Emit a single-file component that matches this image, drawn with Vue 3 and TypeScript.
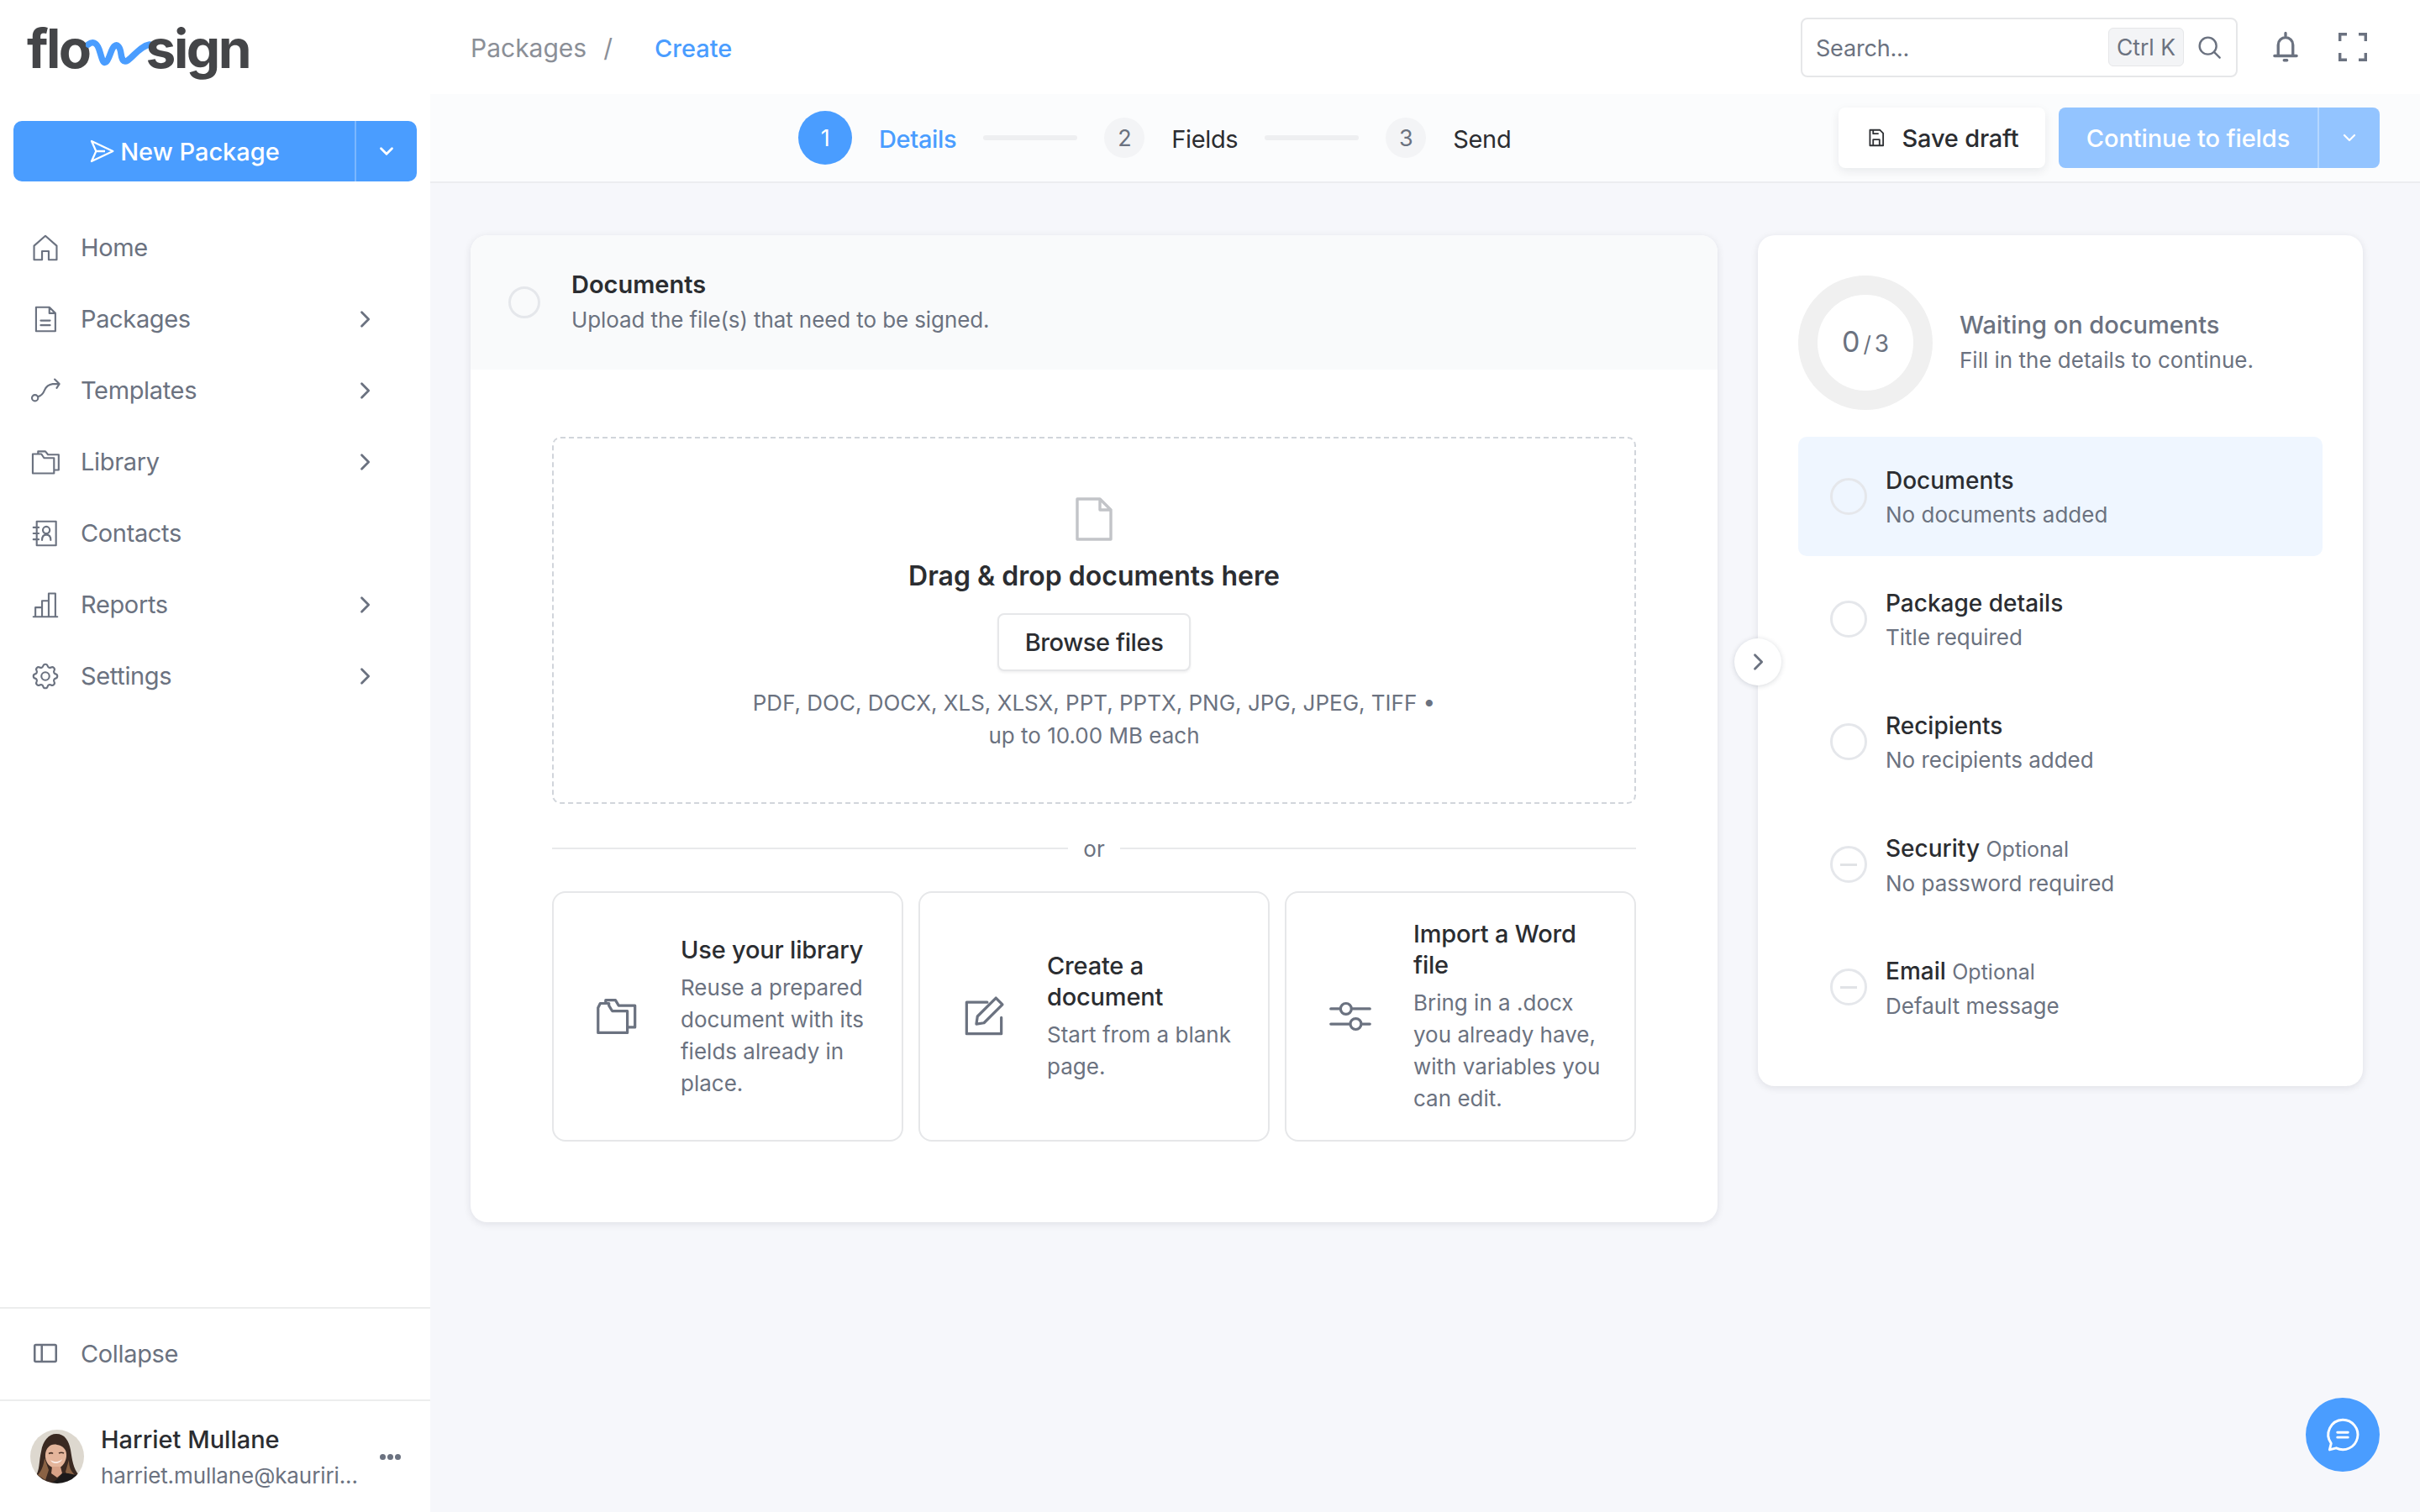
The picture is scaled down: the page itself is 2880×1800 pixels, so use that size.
<template>
  <div class="app">
    <aside class="sidebar">
      <div class="logo">
        <span>flo</span>
        <svg class="logo-wave" viewBox="0 0 78 34" width="78" height="34" fill="none">
          <path d="M3 7C8 3 13 4 16 13c3 9 4 17 8 15 4-2 6-16 10-19 4-3 7 1 8 9 1 7 3 11 8 8C58 20 65 9 76 7" stroke="#4a9dff" stroke-width="7.5" stroke-linecap="round" />
        </svg>
        <span>sign</span>
      </div>

      <div class="new-btn">
        <button type="button" class="new-main">
          <svg viewBox="0 0 24 24" width="32" height="32" fill="none" stroke="#fff" stroke-width="1.7" stroke-linejoin="round"><path d="M3 3l19 9-19 9 4-9zM7 12h8" /></svg>
          New Package
        </button>
        <button type="button" class="new-caret">
          <svg viewBox="0 0 24 24" width="26" height="26" fill="none" stroke="#fff" stroke-width="2.6" stroke-linecap="round" stroke-linejoin="round"><path d="M6 9l6 6 6-6" /></svg>
        </button>
      </div>

      <nav class="nav">
        <a v-for="item in navItems" :key="item.label" class="nav-item">
          <svg class="nav-icon" viewBox="0 0 24 24" width="38" height="38" fill="none" stroke="#6b7280" stroke-width="1.35" stroke-linecap="round" stroke-linejoin="round">
            <path v-for="d in item.paths" :key="d" :d="d" />
          </svg>
          <span>{{ item.label }}</span>
          <svg v-if="item.more" class="nav-more" viewBox="0 0 24 24" width="28" height="28" fill="none" stroke="#6b7280" stroke-width="2.4" stroke-linecap="round" stroke-linejoin="round"><path d="M9 5l7 7-7 7" /></svg>
        </a>
      </nav>

      <div class="collapse">
        <svg viewBox="0 0 24 24" width="34" height="34" fill="none" stroke="#6b7280" stroke-width="1.8" stroke-linejoin="round"><rect x="3" y="5" width="18" height="14" rx="1" /><path d="M9 5v14" /></svg>
        <span>Collapse</span>
      </div>

      <div class="user">
        <svg class="avatar" viewBox="0 0 64 64" width="64" height="64">
          <defs><clipPath id="avatar-clip"><circle cx="32" cy="32" r="32" /></clipPath></defs>
          <g clip-path="url(#avatar-clip)">
            <rect width="64" height="64" fill="#ddd8cf" />
            <g class="avatar-photo">
              <path d="M5 58c7-10 5-20 8-32C15 13 22 5 31 5c10 0 15 8 17 19 2 12 3 22 10 30l-6 10H10z" fill="#3a2921" />
              <path d="M9 54c5-6 7-12 8-20l5 14-4 12zM53 54c-5-5-7-10-7-18l-4 14 4 8z" fill="#8a6244" />
              <path d="M18 29c1-8 7-13 14-11 7 1 12 6 11 14-1 8-6 14-12 14-8 0-14-8-13-17z" fill="#e4b59b" />
              <path d="M24 36c4 3 10 3 14-1-2 6-12 7-14 1z" fill="#fbeee8" />
              <path d="M22 28.500c2-1 4-1 5 0M34 28c2-1 4-1 6 0" stroke="#4a3227" stroke-width="1.6" fill="none" />
              <path d="M26 44h10l2 8-6 5-7-5z" fill="#d8a287" />
              <path d="M24 64c6-3 10-6 14-12 6-1 12 1 20 3l2 9z" fill="#1b191a" />
            </g>
          </g>
        </svg>
        <div class="user-text">
          <strong>Harriet Mullane</strong>
          <small>harriet.mullane@kauriri...</small>
        </div>
        <span class="dots"><i /><i /><i /></span>
      </div>
    </aside>

    <div class="main">
      <header class="topbar">
        <div class="crumbs">
          <span>Packages</span>
          <span class="slash">/</span>
          <span class="current">Create</span>
        </div>
        <div class="search">
          <span class="search-text">Search...</span>
          <kbd>Ctrl K</kbd>
          <svg viewBox="0 0 24 24" width="32" height="32" fill="none" stroke="#6b7280" stroke-width="1.8" stroke-linecap="round"><circle cx="11" cy="11" r="7.5" /><path d="M17 17l4.5 4.5" /></svg>
        </div>
        <svg class="bell" viewBox="0 0 24 24" width="42" height="42" fill="none" stroke="#6b7280" stroke-width="1.9" stroke-linecap="round" stroke-linejoin="round"><path d="M12 2.5v2M7 17v-6.500a5 5 0 0 1 10 0V17M4.500 18h15M11 21h2" /></svg>
        <svg class="full" viewBox="0 0 34 34" width="34" height="34" fill="none" stroke="#6b7280" stroke-width="3.4"><path d="M1.700 10V1.700H10M24 1.700h8.300V10M1.700 24v8.300H10M32.300 24v8.300H24" /></svg>
      </header>

      <div class="stepbar">
        <ol class="steps">
          <template v-for="(step, i) in steps" :key="step">
            <li v-if="i" class="step-line" />
            <li class="step" :class="{ active: i === 0 }">
              <span class="step-num">{{ i + 1 }}</span>
              <span class="step-name">{{ step }}</span>
            </li>
          </template>
        </ol>
        <div class="step-actions">
          <button type="button" class="save">
            <svg viewBox="0 0 24 24" width="26" height="26" fill="none" stroke="#2f3135" stroke-width="1.7" stroke-linejoin="round"><path d="M5 3.500h11l3.500 3.500v13.500H5zM8.500 20.500V14h7v6.500M8.500 3.500v4h6" /></svg>
            Save draft
          </button>
          <div class="continue">
            <button type="button" class="continue-main">Continue to fields</button>
            <button type="button" class="continue-caret">
              <svg viewBox="0 0 24 24" width="24" height="24" fill="none" stroke="#fff" stroke-width="2.2" stroke-linecap="round" stroke-linejoin="round"><path d="M6 9l6 6 6-6" /></svg>
            </button>
          </div>
        </div>
      </div>

      <div class="content">
        <section class="card">
          <div class="card-head">
            <span class="radio small" />
            <div class="head-text">
              <h2>Documents</h2>
              <p>Upload the file(s) that need to be signed.</p>
            </div>
          </div>
          <div class="card-body">
            <div class="drop">
              <svg viewBox="0 0 44 52" width="44" height="52" fill="none" stroke="#c2c4c8" stroke-width="3.4" stroke-linejoin="round"><path d="M2 2h27l13 13v35H2zM29 2v13h13" /></svg>
              <h3>Drag &amp; drop documents here</h3>
              <button type="button" class="browse">Browse files</button>
              <p>PDF, DOC, DOCX, XLS, XLSX, PPT, PPTX, PNG, JPG, JPEG, TIFF •<br />up to 10.00 MB each</p>
            </div>
            <div class="or"><span>or</span></div>
            <div class="options">
              <div v-for="opt in options" :key="opt.desc[0]" class="option">
                <svg class="opt-icon" viewBox="0 0 24 24" width="62" height="62" fill="none" stroke="#6b7280" stroke-width="1.25" stroke-linecap="round" stroke-linejoin="round">
                  <path v-for="d in opt.paths" :key="d" :d="d" />
                </svg>
                <div>
                  <h4><template v-for="(line, i) in opt.title" :key="line"><br v-if="i" />{{ line }}</template></h4>
                  <p><template v-for="(line, i) in opt.desc" :key="line"><br v-if="i" />{{ line }}</template></p>
                </div>
              </div>
            </div>
          </div>
        </section>

        <aside class="panel">
          <button type="button" class="panel-toggle">
            <svg viewBox="0 0 24 24" width="28" height="28" fill="none" stroke="#6b7280" stroke-width="2.4" stroke-linecap="round" stroke-linejoin="round"><path d="M9 5l7 7-7 7" /></svg>
          </button>
          <div class="progress">
            <div class="ring"><span>0</span><small>/</small><em>3</em></div>
            <div class="progress-text">
              <h3>Waiting on documents</h3>
              <p>Fill in the details to continue.</p>
            </div>
          </div>
          <ul class="checklist">
            <li v-for="(row, i) in checklist" :key="row.title" class="check-row" :class="{ current: i === 0 }">
              <span class="radio" :class="{ optional: row.optional }" />
              <div>
                <h4>{{ row.title }} <small v-if="row.optional">Optional</small></h4>
                <p>{{ row.sub }}</p>
              </div>
            </li>
          </ul>
        </aside>
      </div>
    </div>

    <button type="button" class="chat">
      <svg viewBox="0 0 24 24" width="50" height="50" fill="none" stroke="#fff" stroke-width="1.4" stroke-linecap="round" stroke-linejoin="round"><path d="M12 3.500a8.500 8.500 0 1 1-3.700 16.100l-3.800 1 .9-3.600A8.500 8.500 0 0 1 12 3.500zM9 10.700h6M9 13.500h6" /></svg>
    </button>
  </div>
</template>

<script setup lang="ts">
interface NavItem {
  label: string;
  more: boolean;
  paths: string[];
}

interface Option {
  title: string[];
  desc: string[];
  paths: string[];
}

const navItems: NavItem[] = [
  { label: "Home", more: false, paths: ["M12 3 3.500 10.500V21h6v-6.500h5V21h6V10.500z"] },
  { label: "Packages", more: true, paths: ["M5 3h10l4.500 4.500V21H5zM15 3v4.500h4.500M8.500 13h7M8.500 16.500h7"] },
  { label: "Templates", more: true, paths: ["M6.500 17.500a2.300 2.300 0 1 1-4.600 0 2.300 2.300 0 0 1 4.600 0zM6.500 16.500c3-.5 4-2.500 5-5s2.500-4 6-4.500h5M19 3.500L22.500 7l-2 3"] },
  { label: "Library", more: true, paths: ["M2.500 9.500V20.500h16V9H11L9 6H2.500zM6.500 6V4H12l2 2.500h8V18h-3.500"] },
  { label: "Contacts", more: false, paths: ["M5.500 3H20v18H5.500zM3 7.500h4M3 12h4M3 16.500h4M9.500 17c0-3 1.500-4 3.200-4s3.300 1 3.300 4M15.300 9.500a2.600 2.600 0 1 1-5.200 0 2.600 2.600 0 0 1 5.200 0z"] },
  { label: "Reports", more: true, paths: ["M3 21h18M4.500 21v-7h5v7M9.500 21V9h5M14.500 21V3.500h5V21M14.500 9v12"] },
  { label: "Settings", more: true, paths: ["M10.325 4.317c.426-1.756 2.924-1.756 3.350 0a1.724 1.724 0 0 0 2.573 1.066c1.543-.94 3.310.826 2.370 2.370a1.724 1.724 0 0 0 1.065 2.572c1.756.426 1.756 2.924 0 3.350a1.724 1.724 0 0 0-1.066 2.573c.94 1.543-.826 3.310-2.370 2.370a1.724 1.724 0 0 0-2.572 1.065c-.426 1.756-2.924 1.756-3.350 0a1.724 1.724 0 0 0-2.573-1.066c-1.543.94-3.310-.826-2.370-2.370a1.724 1.724 0 0 0-1.065-2.572c-1.756-.426-1.756-2.924 0-3.350a1.724 1.724 0 0 0 1.066-2.573c-.94-1.543.826-3.310 2.370-2.370 1 .608 2.296.07 2.572-1.065z", "M15 12a3 3 0 1 1-6 0 3 3 0 0 1 6 0z"] },
];

const steps = ["Details", "Fields", "Send"];

const options: Option[] = [
  {
    title: ["Use your library"],
    desc: ["Reuse a prepared", "document with its", "fields already in", "place."],
    paths: ["M3 8v11.500h13.500V9.500H9.500L8 7V6H4L3 8zM6.500 6V4.500H11L12.500 7H20v10h-3.500"],
  },
  {
    title: ["Create a", "document"],
    desc: ["Start from a blank", "page."],
    paths: ["M20 12.500V20H4V5.500h9.500M8.500 15.500l.5-3.500 8.500-8.500 3 3L12 15z"],
  },
  {
    title: ["Import a Word", "file"],
    desc: ["Bring in a .docx", "you already have,", "with variables you", "can edit."],
    paths: ["M3 8.500h4.500M12.500 8.500H21M12.500 8.500a2.500 2.500 0 1 1-5 0 2.500 2.500 0 0 1 5 0zM3 15.500h9M17 15.500h4M17 15.500a2.500 2.500 0 1 1-5 0 2.500 2.500 0 0 1 5 0z"],
  },
];

const checklist = [
  { title: "Documents", sub: "No documents added", optional: false },
  { title: "Package details", sub: "Title required", optional: false },
  { title: "Recipients", sub: "No recipients added", optional: false },
  { title: "Security", sub: "No password required", optional: true },
  { title: "Email", sub: "Default message", optional: true },
];
</script>

<style>
html,
body {
  margin: 0;
  background: #f6f7fb;
}
</style>

<style scoped>
.app {
  display: grid;
  grid-template-columns: 512px 1fr;
  height: 1800px;
  font-family: Inter, "Liberation Sans", sans-serif;
  font-size: 29px;
  color: #2b2d31;
}

h2, h3, h4, p, ul, ol {
  margin: 0;
  padding: 0;
  list-style: none;
}

button {
  font: inherit;
  border: 0;
  cursor: pointer;
}

.sidebar {
  display: flex;
  flex-direction: column;
  background: #fff;
  color: #6b7280;
}

.logo {
  display: flex;
  align-items: flex-start;
  height: 144px;
  padding: 22px 0 0 32px;
  box-sizing: border-box;
  font-size: 64px;
  font-weight: 700;
  letter-spacing: -2.5px;
  line-height: 72px;
  color: #444548;
}

.logo-wave {
  margin: 24px -6px 0 -5px;
  flex: none;
}

.new-btn {
  display: flex;
  height: 72px;
  margin: 0 16px;
  border-radius: 10px;
  overflow: hidden;
  background: #4a9dff;
  color: #fff;
  font-weight: 500;
  font-size: 29px;
}

.new-main {
  flex: 1;
  display: flex;
  align-items: center;
  justify-content: center;
  gap: 6px;
  background: none;
  color: inherit;
  border-right: 2px solid #7ab7ff;
}

.new-caret {
  width: 72px;
  background: none;
  display: flex;
  align-items: center;
  justify-content: center;
}

.nav {
  flex: 1;
  padding-top: 36px;
}

.nav-item {
  display: flex;
  align-items: center;
  height: 85px;
  padding-left: 35px;
  gap: 23px;
  letter-spacing: -0.35px;
}

.nav-more {
  margin-left: auto;
  margin-right: 64px;
}

.collapse {
  display: flex;
  align-items: center;
  gap: 25px;
  height: 106px;
  padding: 0 0 2px 37px;
  border-top: 2px solid #eceded;
  border-bottom: 2px solid #eceded;
  letter-spacing: -0.35px;
}

.user {
  display: flex;
  align-items: center;
  height: 132px;
  padding: 0 35px 0 36px;
  gap: 20px;
}

.avatar {
  flex: none;
}

.avatar-photo {
  filter: blur(0.5px);
}

.user-text {
  flex: 1;
  display: grid;
  gap: 10px;
  min-width: 0;
}

.user-text strong {
  font-weight: 500;
  color: #2b2d31;
}

.user-text small {
  font-size: 26px;
  letter-spacing: -0.1px;
  color: #6b7280;
}

.dots {
  display: flex;
  gap: 2px;
}

.dots i {
  width: 7px;
  height: 7px;
  border-radius: 50%;
  background: #6b7280;
}

.main {
  display: flex;
  flex-direction: column;
  min-width: 0;
}

.topbar {
  display: flex;
  align-items: center;
  height: 112px;
  padding: 0 63px 0 48px;
  background: #fff;
}

.crumbs {
  flex: 1;
  display: flex;
  align-items: center;
  gap: 20px;
  padding-top: 2px;
  font-size: 30px;
  color: #8b8f97;
}

.crumbs .slash {
  margin-right: 30px;
}

.crumbs .current {
  color: #4a9dff;
  font-size: 29px;
  font-weight: 500;
}

.search {
  display: flex;
  align-items: center;
  box-sizing: border-box;
  width: 520px;
  height: 71px;
  padding: 0 16px 0 16px;
  border: 2px solid #e6e7e9;
  border-radius: 8px;
  color: #6b7280;
}

.search-text {
  flex: 1;
  padding-top: 2px;
  font-size: 27px;
  letter-spacing: -0.2px;
}

.search kbd {
  display: flex;
  align-items: center;
  height: 44px;
  padding: 0 9px;
  margin-right: 14px;
  border: 1px solid #e6e7e9;
  border-radius: 6px;
  background: #f3f4f6;
  font: inherit;
  font-size: 26.5px;
}

.bell {
  margin-left: 36px;
}

.full {
  margin-left: 42px;
}

.stepbar {
  display: flex;
  align-items: center;
  box-sizing: border-box;
  height: 106px;
  padding: 0 48px 0 438px;
  border-bottom: 2px solid #ecedf0;
  background: #fbfcfd;
}

.steps {
  flex: 1;
  display: flex;
  align-items: center;
  letter-spacing: -0.35px;
}

.step {
  display: flex;
  align-items: center;
  gap: 32px;
}

.step-name {
  padding-top: 2px;
}

.step-num {
  display: flex;
  align-items: center;
  justify-content: center;
  width: 48px;
  height: 48px;
  border-radius: 50%;
  background: #f3f4f6;
  color: #6b7280;
  font-size: 27px;
}

.step.active .step-num {
  width: 64px;
  height: 64px;
  background: #4a9dff;
  color: #fff;
}

.step.active .step-name {
  color: #4a9dff;
  font-weight: 500;
}

.step-line {
  width: 112px;
  height: 6px;
  margin: 0 32px;
  border-radius: 3px;
  background: #eeeff1;
}

.step-actions {
  display: flex;
  gap: 16px;
}

.save {
  display: flex;
  align-items: center;
  justify-content: center;
  gap: 18px;
  width: 246px;
  height: 72px;
  border-radius: 8px;
  background: #fff;
  box-shadow: 0 4px 12px rgba(15, 23, 42, 0.08);
  color: #2b2d31;
  font-weight: 500;
  letter-spacing: -0.2px;
}

.continue {
  display: flex;
  width: 382px;
  height: 72px;
  border-radius: 8px;
  overflow: hidden;
  background: #93c4ff;
  color: #fff;
}

.continue-main {
  flex: 1;
  background: none;
  color: inherit;
  font-weight: 500;
  letter-spacing: -0.1px;
  border-right: 2px solid #b5d7ff;
}

.continue-caret {
  width: 72px;
  background: none;
  display: flex;
  align-items: center;
  justify-content: center;
}

.content {
  position: relative;
  display: grid;
  grid-template-columns: 1484px 720px;
  align-items: start;
  gap: 48px;
  padding: 62px 0 0 48px;
}

.card,
.panel {
  border-radius: 20px;
  background: #fff;
  box-shadow: 0 2px 10px rgba(15, 23, 42, 0.1);
}

.card {
  overflow: hidden;
}

.card-head {
  display: flex;
  align-items: center;
  gap: 37px;
  height: 160px;
  padding-left: 45px;
  background: #f9fafb;
}

.head-text {
  padding-bottom: 3px;
}

.card-head h2 {
  font-size: 29px;
  font-weight: 600;
  line-height: 40px;
}

.card-head p {
  margin-top: 4px;
  font-size: 26px;
  line-height: 36px;
  letter-spacing: -0.1px;
  color: #6b7280;
}

.radio {
  flex: none;
  box-sizing: border-box;
  display: flex;
  align-items: center;
  justify-content: center;
  width: 44px;
  height: 44px;
  border: 3px solid #e5e7eb;
  border-radius: 50%;
}

.radio.small {
  width: 38px;
  height: 38px;
}

.radio.optional::after {
  content: "";
  width: 20px;
  height: 3px;
  background: #e1e3e6;
}

.card-body {
  padding: 80px 97px 96px;
}

.drop {
  display: flex;
  flex-direction: column;
  align-items: center;
  height: 437px;
  box-sizing: border-box;
  padding-top: 70px;
  border: 2px dashed #d1d5db;
  border-radius: 10px;
}

.drop h3 {
  margin-top: 20px;
  font-size: 32px;
  font-weight: 600;
  line-height: 44px;
}

.browse {
  width: 230px;
  height: 69px;
  margin-top: 22px;
  border: 2px solid #e6e7e9;
  border-radius: 8px;
  background: #fff;
  box-shadow: 0 2px 3px rgba(15, 23, 42, 0.06);
  color: #2b2d31;
  font-weight: 500;
  letter-spacing: -0.4px;
}

.drop p {
  margin-top: 18px;
  font-size: 26px;
  line-height: 39px;
  text-align: center;
  color: #6b7280;
}

.or {
  display: flex;
  align-items: center;
  gap: 18px;
  height: 36px;
  margin: 35px 0 33px;
  font-size: 26px;
  color: #6b7280;
}

.or::before,
.or::after {
  content: "";
  flex: 1;
  height: 2px;
  background: #e8e9eb;
}

.options {
  display: grid;
  grid-template-columns: repeat(3, 418px);
  gap: 18px;
}

.option {
  display: flex;
  align-items: center;
  gap: 44px;
  height: 298px;
  box-sizing: border-box;
  padding-left: 45px;
  border: 2px solid #e6e7e9;
  border-radius: 16px;
}

.opt-icon {
  flex: none;
}

.option h4 {
  font-size: 29px;
  font-weight: 500;
  line-height: 37px;
  letter-spacing: -0.2px;
}

.option p {
  margin-top: 8px;
  font-size: 26px;
  line-height: 38px;
  color: #6b7280;
}

.panel {
  position: relative;
  box-sizing: border-box;
  height: 1013px;
  padding: 48px 48px 0;
}

.panel-toggle {
  position: absolute;
  top: 480px;
  left: -28px;
  display: flex;
  align-items: center;
  justify-content: center;
  width: 56px;
  height: 56px;
  border-radius: 50%;
  background: #fff;
  box-shadow: 0 1px 6px rgba(15, 23, 42, 0.16);
}

.progress {
  display: flex;
  align-items: center;
  gap: 32px;
}

.progress-text {
  padding-bottom: 3px;
}

.ring {
  flex: none;
  display: flex;
  align-items: baseline;
  justify-content: center;
  box-sizing: border-box;
  width: 160px;
  height: 160px;
  padding-top: 35px;
  border: 23px solid #f0f0f0;
  border-radius: 50%;
  color: #6b7280;
  font-size: 34px;
}

.ring small {
  margin: 0 4px;
  font-size: 26px;
}

.ring em {
  font-style: normal;
  font-size: 28px;
}

.progress h3 {
  font-size: 29px;
  font-weight: 500;
  line-height: 40px;
  color: #6b7280;
}

.progress p {
  margin-top: 4px;
  font-size: 26px;
  line-height: 36px;
  color: #6b7280;
}

.checklist {
  display: grid;
  gap: 4px;
  margin-top: 32px;
}

.check-row {
  display: flex;
  align-items: center;
  gap: 22px;
  height: 142px;
  padding-left: 38px;
  border-radius: 10px;
}

.check-row > div {
  padding-top: 2px;
}

.check-row.current {
  background: #eff6ff;
}

.check-row h4 {
  font-size: 28px;
  font-weight: 500;
  line-height: 38px;
}

.check-row h4 small {
  font-size: 25px;
  font-weight: 400;
  color: #6b7280;
}

.check-row p {
  margin-top: 4px;
  font-size: 26px;
  line-height: 36px;
  color: #6b7280;
}

.chat {
  position: fixed;
  left: 2744px;
  top: 1664px;
  display: flex;
  align-items: center;
  justify-content: center;
  width: 88px;
  height: 88px;
  border-radius: 50%;
  background: #4a9dff;
}
</style>
